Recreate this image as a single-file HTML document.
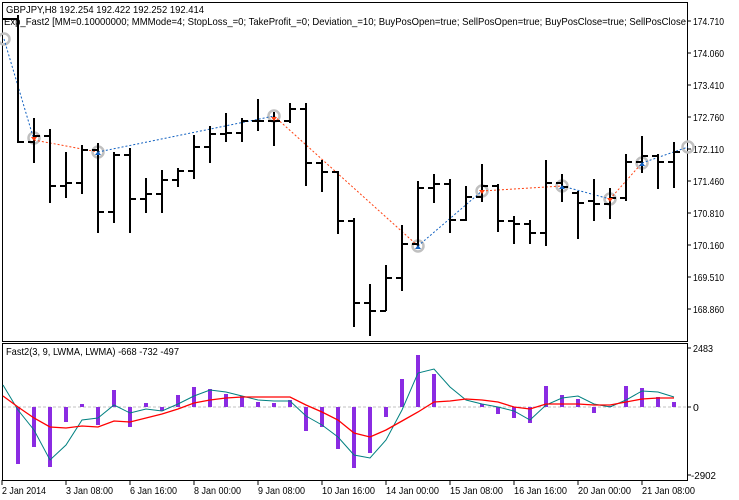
<!DOCTYPE html>
<html><head><meta charset="utf-8"><style>
html,body{margin:0;padding:0;background:#fff;width:739px;height:500px;overflow:hidden}
svg{display:block}
text{font-family:"Liberation Sans",sans-serif;font-size:10.5px;fill:#000}
</style></head><body>
<svg width="739" height="500" viewBox="0 0 739 500" xmlns="http://www.w3.org/2000/svg">
<rect x="0" y="0" width="739" height="500" fill="#fff"/>
<g fill="none" stroke="#000" stroke-width="1">
<rect x="2.5" y="2.5" width="685" height="339"/>
<rect x="2.5" y="343.5" width="685" height="137"/>
</g>
<path d="M687 21H691M687 53H691M687 85H691M687 117H691M687 149H691M687 181H691M687 213H691M687 245H691M687 277H691M687 309H691M687 348H691M687 407H691M687 475H691" stroke="#000"/>
<g lengthAdjust="spacingAndGlyphs">
<text x="693" y="25" textLength="31" lengthAdjust="spacingAndGlyphs">174.710</text>
<text x="693" y="57" textLength="31" lengthAdjust="spacingAndGlyphs">174.060</text>
<text x="693" y="89" textLength="31" lengthAdjust="spacingAndGlyphs">173.410</text>
<text x="693" y="121" textLength="31" lengthAdjust="spacingAndGlyphs">172.760</text>
<text x="693" y="153" textLength="31" lengthAdjust="spacingAndGlyphs">172.110</text>
<text x="693" y="185" textLength="31" lengthAdjust="spacingAndGlyphs">171.460</text>
<text x="693" y="217" textLength="31" lengthAdjust="spacingAndGlyphs">170.810</text>
<text x="693" y="249" textLength="31" lengthAdjust="spacingAndGlyphs">170.160</text>
<text x="693" y="281" textLength="31" lengthAdjust="spacingAndGlyphs">169.510</text>
<text x="693" y="313" textLength="31" lengthAdjust="spacingAndGlyphs">168.860</text>
<text x="693" y="352" textLength="20" lengthAdjust="spacingAndGlyphs">2483</text>
<text x="693" y="411">0</text>
<text x="691" y="479" textLength="25" lengthAdjust="spacingAndGlyphs">-2902</text>
</g>
<g fill="none" stroke="#c0c0c0" stroke-width="2.5">
<circle cx="4" cy="39" r="5.5"/>
<circle cx="34" cy="138" r="5.5"/>
<circle cx="98" cy="152" r="5.5"/>
<circle cx="274" cy="116" r="5.5"/>
<circle cx="418" cy="246" r="5.5"/>
<circle cx="482" cy="191" r="5.5"/>
<circle cx="562" cy="186" r="5.5"/>
<circle cx="610" cy="199" r="5.5"/>
<circle cx="642" cy="163" r="5.5"/>
<circle cx="688" cy="147" r="5.5"/>
</g>
<g fill="none" stroke-width="1" stroke-dasharray="2,2">
<path d="M4 39L34 140M98 152L274 116M418 246L482 191M562 186L610 199M642 163L688 147" stroke="#1060c0"/>
<path d="M34 140L98 152M274 116L418 246M482 191L562 186M610 199L642 163" stroke="#ff4010"/>
</g>
<path fill="none" stroke="#000" stroke-width="2" d="M3 19H18M18 15V143M18 142H24
M34 118V163M28 142H34M34 136H40
M50 129V203M44 136H50M50 186H56
M66 152V198M60 186H66M66 183H72
M82 145V194M76 183H82M82 150H88
M98 143V233M92 150H98M98 212H104
M114 152V223M108 212H114M114 155H120
M130 148V233M124 155H130M130 199H136
M146 178V213M140 199H146M146 194H152
M162 170V213M156 194H162M162 180H168
M178 168V187M172 180H178M178 171H184
M194 135V179M188 171H194M194 147H200
M210 126V163M204 147H210M210 134H216
M226 113V142M220 134H226M226 133H232
M242 118V142M236 133H242M242 121H248
M258 99V131M252 121H258M258 121H264
M274 112V146M268 121H274M274 121H280
M290 103V123M284 121H290M290 109H296
M306 103V186M300 109H306M306 163H312
M322 160V192M316 163H322M322 172H328
M338 171V234M332 172H338M338 221H344
M354 218V327M348 221H354M354 303H360
M370 284V336M364 303H370M370 311H376
M386 265V311M380 311H386M386 278H392
M402 225V291M396 278H402M402 244H408
M418 181V247M412 244H418M418 188H424
M434 174V203M428 188H434M434 184H440
M450 179V233M444 184H450M450 220H456
M466 186V221M460 220H466M466 197H472
M482 164V202M476 197H482M482 186H488
M498 184V232M492 186H498M498 221H504
M514 216V244M508 221H514M514 224H520
M530 220V244M524 224H530M530 233H536
M546 160V246M540 233H546M546 183H552
M562 174V202M556 183H562M562 187H568
M578 191V239M572 193H578M578 203H584
M594 179V221M588 201H594M594 204H600
M610 188V219M604 204H610M610 198H616
M626 154V201M620 198H626M626 162H632
M642 136V173M636 162H642M642 156H648
M658 154V189M652 156H658M658 162H664
M674 142V188M668 162H674M674 152H680"/>
<g fill="#ff4010"><path d="M31 137h6l-3 4z M271 117h6l-3 4z M479 190h6l-3 4z M607 198h6l-3 4z"/></g>
<g fill="#1060c0"><path d="M95 155h6l-3-4z M415 249h6l-3-4z M559 189h6l-3-4z M639 166h6l-3-4z"/></g>
<text x="6" y="13" textLength="198" lengthAdjust="spacingAndGlyphs">GBPJPY,H8  192.254 192.422 192.252 192.414</text>
<svg x="0" y="0" width="686" height="40"><text x="4" y="25" textLength="682" lengthAdjust="spacingAndGlyphs">Exp_Fast2 [MM=0.10000000; MMMode=4; StopLoss_=0; TakeProfit_=0; Deviation_=10; BuyPosOpen=true; SellPosOpen=true; BuyPosClose=true; SellPosClose</text></svg>
<text x="6" y="355" textLength="173" lengthAdjust="spacingAndGlyphs">Fast2(3, 9, LWMA, LWMA) -668 -732 -497</text>
<path d="M3 407H687" stroke="#c0c0c0" stroke-dasharray="3,2"/>
<path fill="none" stroke="#8a2be2" stroke-width="4" d="M18 407V464M34 407V447M50 407V467M66 407V422M82 407V404M98 407V425M114 407V390M130 407V427M146 407V403M162 407V411M178 407V395M194 407V387M210 407V389M226 407V394M242 407V396M258 407V402M274 407V403M290 407V400M306 407V431M322 407V427M338 407V449M354 407V468M370 407V453M386 407V417M402 407V379M418 407V355M434 407V374M482 407V404M498 407V414M514 407V418M530 407V423M546 407V386M562 407V395M578 407V399M594 407V413M610 407V406M626 407V386M642 407V388M658 407V397M674 407V402"/>
<polyline fill="none" stroke="#008080" stroke-width="1" points="3,385 18,410 34,430 50,460 66,445 82,420 98,418 114,405 130,413 146,409 162,411 178,404 194,396 210,390 226,392 242,396 258,400 274,401 290,401 306,416 322,425 338,437 354,455 370,458 386,440 402,410 418,373 434,369 450,387 466,400 482,404 498,407 514,411 530,420 546,405 562,398 578,396 594,404 610,407 626,400 642,391 658,392 674,397"/>
<polyline fill="none" stroke="#ff0000" stroke-width="1.3" points="3,396 18,407 34,418 50,427 66,428 82,426 98,427 114,421 130,422 146,418 162,414 178,409 194,403 210,400 226,398 242,397 258,397 274,397 290,397 306,405 322,412 338,420 354,433 370,437 386,430 402,421 418,412 434,402 450,401 466,399 482,400 498,402 514,407 530,409 546,404 562,404 578,404 594,405 610,405 626,402 642,399 658,398 674,398"/>
<path d="M2 480V485M66 480V485M130 480V485M194 480V485M258 480V485M322 480V485M386 480V485M450 480V485M514 480V485M578 480V485M642 480V485" stroke="#000"/>
<g>
<text x="2" y="494" textLength="44" lengthAdjust="spacingAndGlyphs">2 Jan 2014</text>
<text x="66" y="494" textLength="47" lengthAdjust="spacingAndGlyphs">3 Jan 08:00</text>
<text x="130" y="494" textLength="47" lengthAdjust="spacingAndGlyphs">6 Jan 16:00</text>
<text x="194" y="494" textLength="47" lengthAdjust="spacingAndGlyphs">8 Jan 00:00</text>
<text x="258" y="494" textLength="47" lengthAdjust="spacingAndGlyphs">9 Jan 08:00</text>
<text x="322" y="494" textLength="53" lengthAdjust="spacingAndGlyphs">10 Jan 16:00</text>
<text x="386" y="494" textLength="53" lengthAdjust="spacingAndGlyphs">14 Jan 00:00</text>
<text x="450" y="494" textLength="53" lengthAdjust="spacingAndGlyphs">15 Jan 08:00</text>
<text x="514" y="494" textLength="53" lengthAdjust="spacingAndGlyphs">16 Jan 16:00</text>
<text x="578" y="494" textLength="53" lengthAdjust="spacingAndGlyphs">20 Jan 00:00</text>
<text x="642" y="494" textLength="53" lengthAdjust="spacingAndGlyphs">21 Jan 08:00</text>
</g>
</svg>
</body></html>
